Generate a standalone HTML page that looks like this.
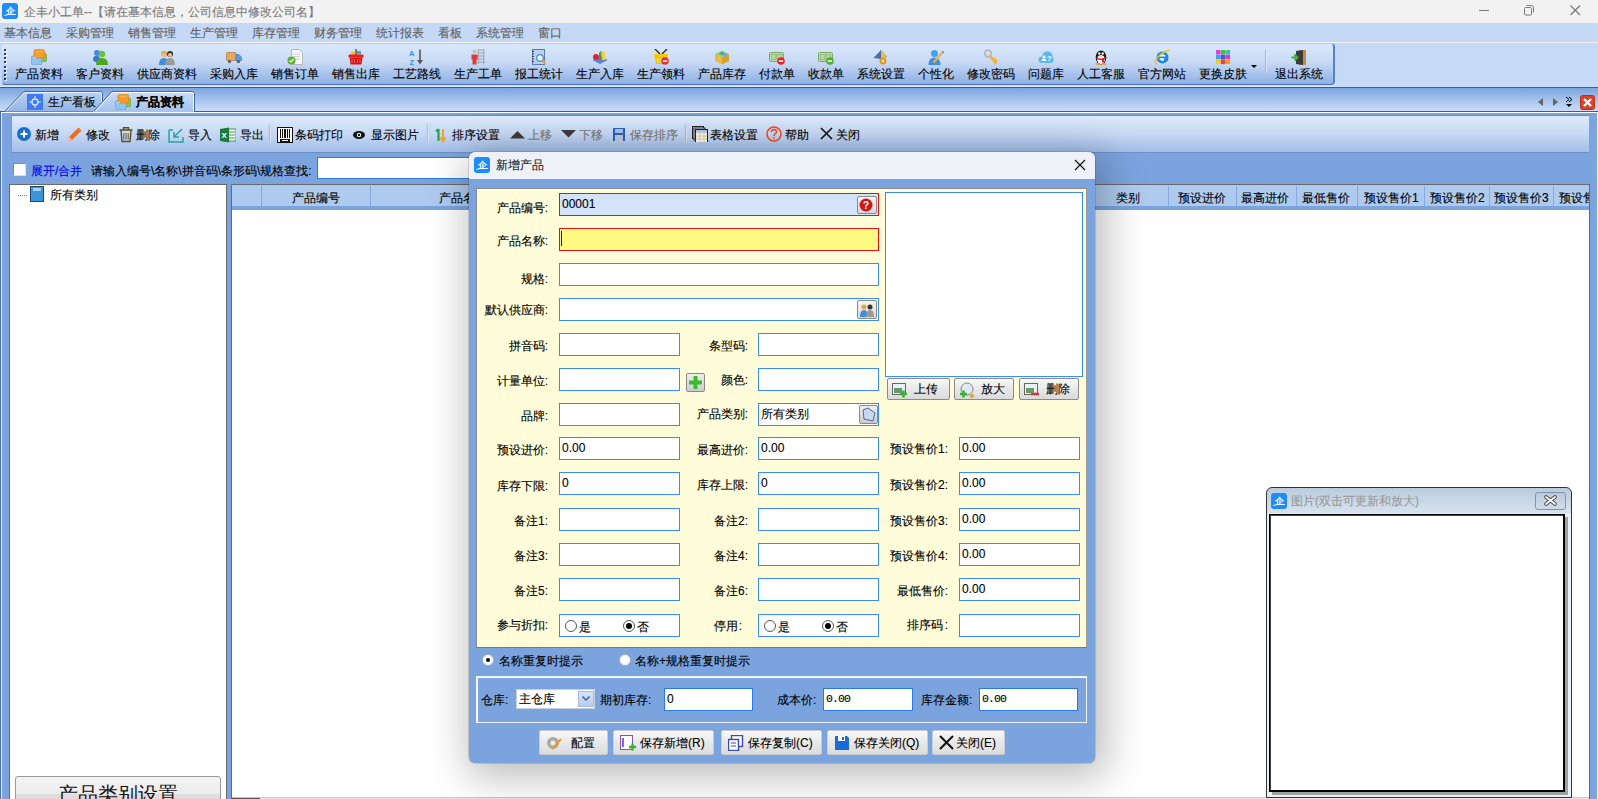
<!DOCTYPE html><html><head><meta charset="utf-8"><style>
*{box-sizing:border-box;margin:0;padding:0}
html,body{width:1598px;height:799px;overflow:hidden;background:#7ba4df;font-family:"Liberation Sans",sans-serif;font-size:12px;color:#000;position:relative}
.a{position:absolute}
.t{position:absolute;white-space:nowrap;line-height:14px;font-size:12px;-webkit-text-stroke:0.12px currentColor}
.lb{-webkit-text-stroke:0.12px currentColor}
.in span{-webkit-text-stroke:0.1px currentColor}
.gray{color:#8a8a8a}
tt{font-family:'Liberation Mono',monospace;font-size:11.5px;letter-spacing:-0.9px;position:relative;top:-1px}
.in{position:absolute;background:#fff;border:1px solid #3b8cf0;height:23px}
.in span{position:absolute;left:2px;top:3px;line-height:14px;white-space:nowrap}
.lb{position:absolute;white-space:nowrap;line-height:14px;text-align:right}
.btn{position:absolute;border:1px solid #b8b8b8;border-radius:2px;background:linear-gradient(#fbfbfb,#ececec 50%,#dcdcdc)}
.sbtn{position:absolute;border:1px solid #9a9a9a;border-radius:2px;background:linear-gradient(#f6f6f6,#d8d8d8)}
</style></head><body>
<div class="a" style="left:0px;top:0px;width:1598px;height:23px;background:#f2f2f2"></div>
<svg class="a" width="16" height="16" viewBox="0 0 16 16" style="left:2px;top:3px"><rect width="16" height="16" rx="3" fill="#1e8cff"/><text x="3.5" y="11" font-size="9" fill="#fff" font-family="Liberation Serif" font-weight="bold">企</text><path d="M2 12.5Q8 10.5 14 11.5" stroke="#fff" stroke-width="0.8" fill="none"/></svg>
<div class="t" style="left:24px;top:5px;color:#7a7a7a">企丰小工单--【请在基本信息，公司信息中修改公司名】</div>
<div class="a" style="left:1479px;top:10px;width:10px;height:1px;background:#7a7a7a"></div>
<svg class="a" width="13" height="13" viewBox="0 0 13 13" style="left:1523px;top:4px"><rect x="1.5" y="3.5" width="7" height="7.5" rx="1" fill="none" stroke="#7a7a7a"/><path d="M3.5 1.5H8.5Q10.5 1.5 10.5 3.5V8.5" fill="none" stroke="#7a7a7a"/></svg>
<svg class="a" width="13" height="13" viewBox="0 0 13 13" style="left:1569px;top:4px"><path d="M1.5 1.5L11 11M11 1.5L1.5 11" stroke="#777" stroke-width="1.15"/></svg>
<div class="a" style="left:0px;top:23px;width:1598px;height:19px;background:#c5d9f6"></div>
<div class="t" style="left:4px;top:26px;color:#5f5f5f">基本信息</div>
<div class="t" style="left:66px;top:26px;color:#5f5f5f">采购管理</div>
<div class="t" style="left:128px;top:26px;color:#5f5f5f">销售管理</div>
<div class="t" style="left:190px;top:26px;color:#5f5f5f">生产管理</div>
<div class="t" style="left:252px;top:26px;color:#5f5f5f">库存管理</div>
<div class="t" style="left:314px;top:26px;color:#5f5f5f">财务管理</div>
<div class="t" style="left:376px;top:26px;color:#5f5f5f">统计报表</div>
<div class="t" style="left:438px;top:26px;color:#5f5f5f">看板</div>
<div class="t" style="left:476px;top:26px;color:#5f5f5f">系统管理</div>
<div class="t" style="left:538px;top:26px;color:#5f5f5f">窗口</div>
<div class="a" style="left:0px;top:42px;width:1598px;height:45px;background:#c6daf6;border-top:1px solid #f0f1f2"></div>
<div class="a" style="left:0px;top:85px;width:1336px;height:2px;background:#d4e3fa"></div>
<div class="a" style="left:1px;top:43px;width:1334px;height:42px;border-radius:4px;background:linear-gradient(#d9e8fb,#c8daf5 45%,#8db0e5);border:1px solid #c6d8f4;border-top-color:#b3cdf3;border-right:2px solid #5584cc;border-bottom:1px solid #4d6fae"></div>
<div class="a" style="left:4px;top:49.0px;width:2px;height:2px;background:#1f3a7a;box-shadow:1px 1px 0 #fff"></div>
<div class="a" style="left:4px;top:53.15px;width:2px;height:2px;background:#1f3a7a;box-shadow:1px 1px 0 #fff"></div>
<div class="a" style="left:4px;top:57.3px;width:2px;height:2px;background:#1f3a7a;box-shadow:1px 1px 0 #fff"></div>
<div class="a" style="left:4px;top:61.45px;width:2px;height:2px;background:#1f3a7a;box-shadow:1px 1px 0 #fff"></div>
<div class="a" style="left:4px;top:65.6px;width:2px;height:2px;background:#1f3a7a;box-shadow:1px 1px 0 #fff"></div>
<div class="a" style="left:4px;top:69.75px;width:2px;height:2px;background:#1f3a7a;box-shadow:1px 1px 0 #fff"></div>
<div class="a" style="left:4px;top:73.9px;width:2px;height:2px;background:#1f3a7a;box-shadow:1px 1px 0 #fff"></div>
<div class="a" style="left:4px;top:78.05000000000001px;width:2px;height:2px;background:#1f3a7a;box-shadow:1px 1px 0 #fff"></div>
<div class="t" style="left:15px;top:67px;">产品资料</div>
<svg class="a" width="16" height="16" viewBox="0 0 16 16" style="left:31px;top:49px"><rect x="9.5" y="4.5" width="6" height="8" rx="1" fill="#8bc53f" stroke="#6a9a30" stroke-width="0.6"/><rect x="0.5" y="7" width="10.5" height="8.5" rx="1" fill="#8ec5f0" stroke="#6a9ad0" stroke-width="0.6"/><rect x="3" y="0.5" width="10.5" height="8.5" rx="1.5" fill="#f59d2a" stroke="#d87a10" stroke-width="0.6"/><ellipse cx="6.5" cy="2.5" rx="1.5" ry="0.8" fill="#fbbf5a"/><ellipse cx="10" cy="2.5" rx="1.5" ry="0.8" fill="#fbbf5a"/><ellipse cx="3.5" cy="8.5" rx="1.3" ry="0.7" fill="#c0e0fa"/></svg>
<div class="t" style="left:76px;top:67px;">客户资料</div>
<svg class="a" width="16" height="16" viewBox="0 0 16 16" style="left:92px;top:49px"><circle cx="5" cy="4" r="3" fill="#4a8ad8"/><rect x="1" y="7" width="7" height="6" rx="3" fill="#3a78c8"/><circle cx="10" cy="5" r="3.2" fill="#6cc03a"/><path d="M4 16Q4 9 10 9Q16 9 16 16Z" fill="#4aa81e"/></svg>
<div class="t" style="left:137px;top:67px;">供应商资料</div>
<svg class="a" width="16" height="16" viewBox="0 0 16 16" style="left:159px;top:49px"><circle cx="5" cy="5" r="3" fill="#e2a24a"/><path d="M0 16Q0 9 5 9Q10 9 10 16Z" fill="#3d8ee0"/><circle cx="11" cy="5" r="3" fill="#333"/><path d="M6 16Q6 9 11 9Q16 9 16 16Z" fill="#9a9a9a"/><circle cx="11" cy="6" r="2" fill="#f0c08a"/><circle cx="5" cy="6" r="2" fill="#f0c08a"/></svg>
<div class="t" style="left:210px;top:67px;">采购入库</div>
<svg class="a" width="16" height="16" viewBox="0 0 16 16" style="left:226px;top:49px"><rect x="0.5" y="3.5" width="9.5" height="8" rx="0.8" fill="#e8a860" stroke="#b07838" stroke-width="0.7"/><path d="M10 5.5H13L15.5 8.5V11.5H10Z" fill="#5aa0e0" stroke="#3a70b0" stroke-width="0.6"/><circle cx="3.5" cy="12.5" r="1.7" fill="#666"/><circle cx="12.5" cy="12.5" r="1.7" fill="#666"/></svg>
<div class="t" style="left:271px;top:67px;">销售订单</div>
<svg class="a" width="16" height="16" viewBox="0 0 16 16" style="left:287px;top:49px"><path d="M4.5 0.5H12L15.5 4V15.5H4.5Z" fill="#f6f6f6" stroke="#b8b8b8"/><path d="M6 5H13M6 7.5H13M6 10H13" stroke="#c8c8c8" stroke-width="0.8"/><circle cx="4.5" cy="11.5" r="4" fill="#5cb030"/><path d="M2.5 11.5L4 13L6.8 10" stroke="#fff" stroke-width="1.2" fill="none"/></svg>
<div class="t" style="left:332px;top:67px;">销售出库</div>
<svg class="a" width="16" height="16" viewBox="0 0 16 16" style="left:348px;top:49px"><rect x="3" y="2.5" width="10" height="3" rx="1" fill="#f0c020"/><rect x="9" y="2" width="4" height="3" fill="#40a0e0"/><rect x="7" y="0" width="2" height="6" fill="#777"/><rect x="0.5" y="5.5" width="15" height="3" rx="1" fill="#e81c1c"/><path d="M1.5 8.5H14.5L13.5 15.5H2.5Z" fill="#d41414"/><path d="M4 10V14M6.5 10V14M9.5 10V14M12 10V14" stroke="#ff8080" stroke-width="0.7"/></svg>
<div class="t" style="left:393px;top:67px;">工艺路线</div>
<svg class="a" width="16" height="16" viewBox="0 0 16 16" style="left:409px;top:49px"><text x="0" y="7" font-size="7.5" fill="#3a90e8" font-family="Liberation Sans" font-weight="bold">A</text><text x="0.5" y="15.5" font-size="7.5" fill="#3a90e8" font-family="Liberation Sans" font-weight="bold">Z</text><path d="M11 0.5V14" stroke="#555" stroke-width="1.6"/><path d="M8 11L11 15.5L14 11Z" fill="#555"/></svg>
<div class="t" style="left:454px;top:67px;">生产工单</div>
<svg class="a" width="16" height="16" viewBox="0 0 16 16" style="left:470px;top:49px"><path d="M7 1H15M7 4H15M7 7H15M7 10H15M7 13H15" stroke="#9aa4b0" stroke-width="1.2"/><path d="M8.5 0.5V15M13.5 0.5V15" stroke="#9aa4b0" stroke-width="0.8"/><circle cx="4.5" cy="2.5" r="2" fill="#c0c0c0"/><path d="M1.5 5.5H7.5V10.5H6.5V15.5H2.5V10.5H1.5Z" fill="#e03838"/></svg>
<div class="t" style="left:515px;top:67px;">报工统计</div>
<svg class="a" width="16" height="16" viewBox="0 0 16 16" style="left:531px;top:49px"><rect x="1.5" y="0.5" width="12" height="15" fill="#bcd0ea" stroke="#5a7ab0"/><path d="M1 2.5H3M1 5H3M1 7.5H3M1 10H3M1 12.5H3" stroke="#445"/><circle cx="9" cy="9" r="3.3" fill="#e8f4ff" stroke="#4a8ad0" stroke-width="1.2"/><path d="M11.3 11.3L14.5 14.5" stroke="#e0a030" stroke-width="2"/></svg>
<div class="t" style="left:576px;top:67px;">生产入库</div>
<svg class="a" width="16" height="16" viewBox="0 0 16 16" style="left:592px;top:49px"><path d="M0.5 11L8 7L15.5 11L8 15Z" fill="#5a80d8"/><circle cx="4" cy="8" r="3" fill="#e02030"/><path d="M7 4L9.5 1.5V10L7 11Z" fill="#40a050"/><rect x="10" y="3" width="3" height="8" fill="#f0d040"/></svg>
<div class="t" style="left:637px;top:67px;">生产领料</div>
<svg class="a" width="16" height="16" viewBox="0 0 16 16" style="left:653px;top:49px"><path d="M2 0L7 5M14 0L9 5" stroke="#222" stroke-width="1.3"/><rect x="1" y="5" width="14" height="3" fill="#f8c810"/><path d="M2 8H14L13 15H3Z" fill="#f0c000"/><path d="M5 9V14M8 9V14" stroke="#fff0a0" stroke-width="1"/><circle cx="12" cy="12" r="3.8" fill="#e83030"/><rect x="9.8" y="11.3" width="4.4" height="1.5" fill="#fff"/></svg>
<div class="t" style="left:698px;top:67px;">产品库存</div>
<svg class="a" width="16" height="16" viewBox="0 0 16 16" style="left:714px;top:49px"><path d="M1 5L8 1.5L15 5L8 8.5Z" fill="#9ad060"/><path d="M1 5V12L8 15.5V8.5Z" fill="#f0b840"/><path d="M15 5V12L8 15.5V8.5Z" fill="#d8a030"/><path d="M8 3L11 4.5L8 6L5 4.5Z" fill="#4090e0"/><path d="M11 4.5L14 6L11 7.5L8 6Z" fill="#50b0f0"/></svg>
<div class="t" style="left:759px;top:67px;">付款单</div>
<svg class="a" width="16" height="16" viewBox="0 0 16 16" style="left:769px;top:49px"><rect x="0.5" y="3.5" width="14" height="9" rx="1" fill="#bcd9a8" stroke="#7ea86a"/><rect x="2.5" y="5.5" width="10" height="5" fill="none" stroke="#8ab878" stroke-width="0.8"/><ellipse cx="7.5" cy="8" rx="2" ry="2.2" fill="#9cc888"/><circle cx="12" cy="12" r="3.8" fill="#e02828"/><rect x="9.8" y="11.3" width="4.4" height="1.5" fill="#fff"/></svg>
<div class="t" style="left:808px;top:67px;">收款单</div>
<svg class="a" width="16" height="16" viewBox="0 0 16 16" style="left:818px;top:49px"><rect x="0.5" y="3.5" width="14" height="9" rx="1" fill="#bcd9a8" stroke="#7ea86a"/><rect x="2.5" y="5.5" width="10" height="5" fill="none" stroke="#8ab878" stroke-width="0.8"/><ellipse cx="7.5" cy="8" rx="2" ry="2.2" fill="#9cc888"/><circle cx="12" cy="12" r="3.8" fill="#4cb02a"/><rect x="9.8" y="11.3" width="4.4" height="1.5" fill="#fff"/></svg>
<div class="t" style="left:857px;top:67px;">系统设置</div>
<svg class="a" width="16" height="16" viewBox="0 0 16 16" style="left:873px;top:49px"><path d="M0.5 9L8 1L14 8L8 10Z" fill="#4a6ea8"/><path d="M8 1L14 8L8 10Z" fill="#e8c050"/><circle cx="10" cy="12" r="3.5" fill="#e09a20"/><circle cx="10" cy="12" r="1.3" fill="#fff3c0"/></svg>
<div class="t" style="left:918px;top:67px;">个性化</div>
<svg class="a" width="16" height="16" viewBox="0 0 16 16" style="left:928px;top:49px"><circle cx="6.5" cy="4.5" r="3.5" fill="#4aa0f0"/><path d="M0.5 16Q0.5 8.5 6.5 8.5Q12.5 8.5 12.5 16Z" fill="#3a90e8"/><path d="M5.5 13.5L14.5 3.5" stroke="#f0b040" stroke-width="2.2"/><path d="M14.5 3.5L15.5 2.5" stroke="#e05050" stroke-width="2.2"/></svg>
<div class="t" style="left:967px;top:67px;">修改密码</div>
<svg class="a" width="16" height="16" viewBox="0 0 16 16" style="left:983px;top:49px"><circle cx="5" cy="4.5" r="3.3" fill="none" stroke="#b8b8b8" stroke-width="1.8"/><path d="M6.5 6.5L13.5 14.5" stroke="#f0b030" stroke-width="2.6"/><path d="M10.5 11L12.5 9M12 13L14 11" stroke="#f0b030" stroke-width="1.6"/></svg>
<div class="t" style="left:1028px;top:67px;">问题库</div>
<svg class="a" width="16" height="16" viewBox="0 0 16 16" style="left:1038px;top:49px"><path d="M4 14Q0 14 0.5 10Q1 7 4 7.5Q5 2 10 2.5Q15 3 14.5 8Q16 9 15.5 11.5Q15 14 12 14Z" fill="#5ab8ef"/><circle cx="6" cy="8" r="1.6" fill="#fff"/><path d="M3.5 12Q3.5 9.8 6 9.8Q8.5 9.8 8.5 12Z" fill="#fff"/><text x="9" y="11.5" font-size="7.5" fill="#fff" font-family="Liberation Sans" font-weight="bold">?</text></svg>
<div class="t" style="left:1077px;top:67px;">人工客服</div>
<svg class="a" width="16" height="16" viewBox="0 0 16 16" style="left:1093px;top:49px"><ellipse cx="8" cy="8.5" rx="5.3" ry="7" fill="#151515"/><ellipse cx="8" cy="10.5" rx="3.8" ry="4.5" fill="#fff"/><circle cx="6.3" cy="4.5" r="1.2" fill="#fff"/><circle cx="9.7" cy="4.5" r="1.2" fill="#fff"/><path d="M6.5 6.5H9.5L8 8Z" fill="#f0a020"/><path d="M3.5 8.5Q8 10.5 12.5 8.5V10Q8 12 3.5 10Z" fill="#e02020"/><rect x="9" y="9.5" width="2" height="4" fill="#e02020"/><ellipse cx="5" cy="15" rx="2.5" ry="1" fill="#f0a020"/><ellipse cx="11" cy="15" rx="2.5" ry="1" fill="#f0a020"/></svg>
<div class="t" style="left:1138px;top:67px;">官方网站</div>
<svg class="a" width="16" height="16" viewBox="0 0 16 16" style="left:1154px;top:49px"><circle cx="8.5" cy="8.5" r="6" fill="#1e88e0"/><circle cx="8.5" cy="8.5" r="3.2" fill="#fff"/><rect x="5" y="7.5" width="7" height="1.8" fill="#1e88e0"/><rect x="10" y="9.3" width="4" height="2.5" fill="#1e88e0"/><path d="M2.5 15.5Q-1 12 6 6Q12 1 15.5 1.5" stroke="#f4c020" stroke-width="1.5" fill="none"/></svg>
<div class="t" style="left:1199px;top:67px;">更换皮肤</div>
<svg class="a" width="16" height="16" viewBox="0 0 16 16" style="left:1215px;top:49px"><rect x="1" y="1" width="4.5" height="4.5" fill="#e040e0"/><rect x="5.8" y="1" width="4.5" height="4.5" fill="#40c040"/><rect x="10.6" y="1" width="4.5" height="4.5" fill="#40c0a0"/><rect x="1" y="5.8" width="4.5" height="4.5" fill="#40a0f0"/><rect x="5.8" y="5.8" width="4.5" height="4.5" fill="#5050e0"/><rect x="10.6" y="5.8" width="4.5" height="4.5" fill="#d040d0"/><rect x="1" y="10.6" width="4.5" height="4.5" fill="#f0d020"/><rect x="5.8" y="10.6" width="4.5" height="4.5" fill="#f04040"/><rect x="10.6" y="10.6" width="4.5" height="4.5" fill="#f0a020"/></svg>
<div class="t" style="left:1275px;top:67px;">退出系统</div>
<svg class="a" width="16" height="16" viewBox="0 0 16 16" style="left:1291px;top:49px"><rect x="8" y="1" width="7" height="15" fill="#c88a40"/><path d="M5 2L12 1V16L5 15Z" fill="#3a3a3a"/><path d="M0.5 8.5H6M3.5 5.5L6.5 8.5L3.5 11.5" stroke="#40b030" stroke-width="2.2" fill="none"/></svg>
<svg class="a" width="6" height="3" viewBox="0 0 6 3" style="left:1251px;top:65px"><path d="M0 0H6L3 3Z" fill="#000"/></svg>
<div class="a" style="left:1265px;top:50px;width:2px;height:23px;background:linear-gradient(90deg,#7e9fd3,#fff)"></div>
<div class="a" style="left:0px;top:87px;width:1598px;height:25px;background:linear-gradient(#7ba4e0,#a9c5ed 55%,#c9dcf7);border-top:1px solid #3b5c9c;border-bottom:1px solid #3b5c9c"></div>
<svg class="a" width="200" height="25" viewBox="0 0 200 25" style="left:0px;top:88px"><defs><linearGradient id="g1" x1="0" y1="0" x2="0" y2="1"><stop offset="0" stop-color="#bcd2f2"/><stop offset="1" stop-color="#92b4e6"/></linearGradient><linearGradient id="g2" x1="0" y1="0" x2="0" y2="1"><stop offset="0" stop-color="#cadcf6"/><stop offset="1" stop-color="#a3c1ec"/></linearGradient></defs><path d="M4.5 23.5L24 3.5H100Q102.5 3.5 102.5 6V23.5" fill="url(#g1)" stroke="#4068ac"/><path d="M6.5 23L24.5 4.5H100Q101.5 4.5 101.5 6V23" fill="none" stroke="#eef4fc" stroke-width="0.9"/><path d="M92.5 24.5L112 3.5H192Q194.5 3.5 194.5 6V24.5" fill="url(#g2)" stroke="#4068ac"/><path d="M94.5 24.5L112.5 4.5H192Q193.5 4.5 193.5 6V24.5" fill="none" stroke="#fff" stroke-width="0.9"/><rect x="93" y="23" width="101" height="2" fill="#a6c3ec"/></svg>
<svg class="a" width="16" height="16" viewBox="0 0 16 16" style="left:27px;top:94px"><rect width="16" height="16" fill="#3f7af0"/><circle cx="8" cy="8" r="3" fill="none" stroke="#cfe0ff" stroke-width="1.4"/><path d="M8 2V5M8 11V14M2 8H5M11 8H14" stroke="#cfe0ff" stroke-width="1.2"/></svg>
<div class="t" style="left:48px;top:95px;">生产看板</div>
<svg class="a" width="16" height="16" viewBox="0 0 16 16" style="left:115px;top:94px"><rect x="9.5" y="4.5" width="6" height="8" rx="1" fill="#8bc53f" stroke="#6a9a30" stroke-width="0.6"/><rect x="0.5" y="7" width="10.5" height="8.5" rx="1" fill="#8ec5f0" stroke="#6a9ad0" stroke-width="0.6"/><rect x="3" y="0.5" width="10.5" height="8.5" rx="1.5" fill="#f59d2a" stroke="#d87a10" stroke-width="0.6"/><ellipse cx="6.5" cy="2.5" rx="1.5" ry="0.8" fill="#fbbf5a"/><ellipse cx="10" cy="2.5" rx="1.5" ry="0.8" fill="#fbbf5a"/><ellipse cx="3.5" cy="8.5" rx="1.3" ry="0.7" fill="#c0e0fa"/></svg>
<div class="t" style="left:136px;top:95px;font-weight:bold">产品资料</div>
<svg class="a" width="5" height="8" viewBox="0 0 5 8" style="left:1538px;top:98px"><path d="M5 0V8L0 4Z" fill="#666"/></svg>
<svg class="a" width="5" height="8" viewBox="0 0 5 8" style="left:1553px;top:98px"><path d="M0 0V8L5 4Z" fill="#666"/></svg>
<svg class="a" width="8" height="11" viewBox="0 0 8 11" style="left:1565px;top:96px"><path d="M1 1L4 3.5L1 6M4 1L7 3.5L4 6" stroke="#000" fill="none"/><path d="M1 8H7L4 11Z" fill="#000"/></svg>
<svg class="a" width="15" height="15" viewBox="0 0 15 15" style="left:1580px;top:95px"><rect x="0.5" y="0.5" width="14" height="14" rx="2" fill="#e0402a" stroke="#b03020"/><path d="M4 4L11 11M11 4L4 11" stroke="#fff" stroke-width="2.4"/></svg>
<div class="a" style="left:0px;top:112px;width:1598px;height:1px;background:#fff"></div>
<div class="a" style="left:0px;top:113px;width:1598px;height:686px;background:#7ba4df"></div>
<div class="a" style="left:1px;top:113px;width:1px;height:686px;background:#eaf1fb"></div>
<div class="a" style="left:0px;top:112px;width:1px;height:687px;background:#4a6fb0"></div>
<div class="a" style="left:11px;top:115px;width:1579px;height:38px;background:linear-gradient(#dfeafb,#c6d8f4 50%,#a2bee9);border:1px solid #7f9bca;border-top-color:#6a88b8;border-bottom-color:#6f8fc4"></div>
<svg class="a" width="14" height="16" viewBox="0 0 14 16" style="left:17px;top:127px"><circle cx="7" cy="7" r="7" fill="#1a6fd0"/><path d="M7 3.5V10.5M3.5 7H10.5" stroke="#fff" stroke-width="2"/></svg>
<div class="t" style="left:35px;top:128px;">新增</div>
<svg class="a" width="15" height="16" viewBox="0 0 15 16" style="left:67px;top:127px"><path d="M1 14L2 10L10 2L13 5L5 13Z" fill="#f26a1b"/><path d="M10 2L11.5 0.5L14.5 3.5L13 5Z" fill="#f26a1b"/><path d="M1 14L2 10L5 13Z" fill="#fbb"/></svg>
<div class="t" style="left:86px;top:128px;">修改</div>
<svg class="a" width="14" height="16" viewBox="0 0 14 16" style="left:119px;top:127px"><path d="M0.5 3H13.5M4.5 3V0.8H9.5V3M2 3.5L3 14.5H11L12 3.5" stroke="#5e4f1e" stroke-width="1.4" fill="none"/><path d="M4.8 6V12.5M7 6V12.5M9.2 6V12.5" stroke="#5e4f1e" stroke-width="0.9"/></svg>
<div class="t" style="left:136px;top:128px;">删除</div>
<svg class="a" width="16" height="16" viewBox="0 0 16 16" style="left:168px;top:127px"><path d="M1 3V15H15V10M1 3H5" stroke="#26a59a" stroke-width="1.5" fill="none"/><path d="M14 2L6 10M6 5V10H11" stroke="#26a59a" stroke-width="1.5" fill="none"/></svg>
<div class="t" style="left:188px;top:128px;">导入</div>
<svg class="a" width="16" height="16" viewBox="0 0 16 16" style="left:220px;top:127px"><rect x="5" y="2" width="11" height="12" fill="#fff" stroke="#3a9a4a"/><path d="M8 5H15M8 8H15M8 11H15" stroke="#3a9a4a"/><path d="M0 2L9 0.5V15.5L0 14Z" fill="#1e7a3a"/><text x="1.5" y="11" font-size="8" font-weight="bold" fill="#fff" font-family="Liberation Sans">X</text></svg>
<div class="t" style="left:240px;top:128px;">导出</div>
<svg class="a" width="16" height="16" viewBox="0 0 16 16" style="left:277px;top:127px"><rect x="0.5" y="0.5" width="15" height="15" fill="#fff" stroke="#111"/><rect x="3" y="2" width="1" height="9" fill="#111"/><rect x="5" y="2" width="1" height="9" fill="#111"/><rect x="7" y="2" width="2" height="9" fill="#111"/><rect x="10" y="2" width="1" height="9" fill="#111"/><rect x="12" y="2" width="1" height="9" fill="#111"/><rect x="3" y="12" width="10" height="3" fill="#111"/><rect x="5" y="13" width="6" height="1" fill="#fff"/></svg>
<div class="t" style="left:295px;top:128px;">条码打印</div>
<svg class="a" width="12" height="16" viewBox="0 0 12 16" style="left:353px;top:127px"><g transform="translate(0,3)"><ellipse cx="6" cy="5" rx="6" ry="4" fill="#111"/><circle cx="6" cy="5" r="2.2" fill="#fff"/><circle cx="6" cy="5" r="1.2" fill="#111"/></g></svg>
<div class="t" style="left:371px;top:128px;">显示图片</div>
<svg class="a" width="11" height="16" viewBox="0 0 11 16" style="left:435px;top:127px"><path d="M3.5 2V14" stroke="#1fa84a" stroke-width="2.2"/><path d="M1 4.5L3.5 2" stroke="#1fa84a" stroke-width="1.8"/><path d="M8 2V13M5.5 10.5L8 14L10.5 10.5" stroke="#f7a21b" stroke-width="2" fill="none"/></svg>
<div class="t" style="left:452px;top:128px;">排序设置</div>
<svg class="a" width="15" height="16" viewBox="0 0 15 16" style="left:510px;top:127px"><path d="M0 11.5L7.5 4L15 11.5Z" fill="#3a3a3a"/></svg>
<div class="t" style="left:528px;top:128px;color:#777">上移</div>
<svg class="a" width="15" height="16" viewBox="0 0 15 16" style="left:561px;top:127px"><path d="M0 3H15L7.5 10.5Z" fill="#3a3a3a"/></svg>
<div class="t" style="left:579px;top:128px;color:#777">下移</div>
<svg class="a" width="12" height="16" viewBox="0 0 12 16" style="left:613px;top:127px"><rect x="0" y="1" width="12" height="13" fill="#2a62c0"/><rect x="2" y="2" width="8" height="4" fill="#a8c0e8"/><rect x="2" y="8" width="8" height="6" fill="#c0c8d8"/></svg>
<div class="t" style="left:630px;top:128px;color:#777">保存排序</div>
<svg class="a" width="16" height="16" viewBox="0 0 16 16" style="left:692px;top:126px"><g><rect x="0.5" y="0.5" width="11" height="12" fill="#f8e8b0" stroke="#222"/><rect x="2" y="2" width="11" height="12" fill="#e8f0f8" stroke="#222"/><rect x="3.5" y="3.5" width="12" height="13" fill="#fffef0" stroke="#222"/><path d="M4 7H15M4 10H15M4 13H15M8 4V16M12 4V16" stroke="#d8c890" stroke-width="0.8"/><rect x="4" y="4" width="11" height="2.5" fill="#a8c8f0"/></g></svg>
<div class="t" style="left:710px;top:128px;">表格设置</div>
<svg class="a" width="16" height="16" viewBox="0 0 16 16" style="left:766px;top:126px"><g><circle cx="8" cy="8" r="7" fill="none" stroke="#f04a1c" stroke-width="1.6"/><path d="M5.5 6Q5.5 3.5 8 3.5Q10.5 3.5 10.5 5.8Q10.5 7.3 8.5 8.3Q8 8.6 8 10" stroke="#f04a1c" stroke-width="1.5" fill="none"/><rect x="7.2" y="11.2" width="1.6" height="1.6" fill="#f04a1c"/></g></svg>
<div class="t" style="left:785px;top:128px;">帮助</div>
<svg class="a" width="13" height="16" viewBox="0 0 13 16" style="left:820px;top:127px"><path d="M1 1L12 12M12 1L1 12" stroke="#111" stroke-width="1.6"/></svg>
<div class="t" style="left:836px;top:128px;">关闭</div>
<div class="a" style="left:268px;top:123px;width:5px;height:21px;background:rgba(190,210,240,0.35)"></div>
<div class="a" style="left:269px;top:125px;width:2px;height:17px;background:linear-gradient(90deg,#8eaad8,#f6f9fe)"></div>
<div class="a" style="left:426px;top:123px;width:5px;height:21px;background:rgba(190,210,240,0.35)"></div>
<div class="a" style="left:427px;top:125px;width:2px;height:17px;background:linear-gradient(90deg,#8eaad8,#f6f9fe)"></div>
<div class="a" style="left:684px;top:123px;width:5px;height:21px;background:rgba(190,210,240,0.35)"></div>
<div class="a" style="left:685px;top:125px;width:2px;height:17px;background:linear-gradient(90deg,#8eaad8,#f6f9fe)"></div>
<div class="a" style="left:13px;top:163px;width:13px;height:13px;background:#fff;border:1px solid #8a8a8a;border-right-color:#ddd;border-bottom-color:#ddd"></div>
<div class="t" style="left:31px;top:164px;color:#0000f0">展开/合并</div>
<div class="t" style="left:91px;top:164px;">请输入编号\名称\拼音码\条形码\规格查找:</div>
<div class="a" style="left:317px;top:157px;width:300px;height:22px;background:#fff;border:1px solid #2a7ae2"></div>
<div class="a" style="left:9px;top:184px;width:218px;height:615px;background:#fff;border:1px solid #6a6a6a;border-bottom:none"></div>
<div class="a" style="left:18px;top:195px;width:10px;height:1px;background:repeating-linear-gradient(90deg,#777 0 1px,transparent 1px 2px)"></div>
<svg class="a" width="14" height="16" viewBox="0 0 14 16" style="left:30px;top:186px"><rect x="0.5" y="0.5" width="13" height="15" fill="#3a94d8" stroke="#1a4a80"/><rect x="3" y="2" width="8" height="3" fill="#a8d4f4"/></svg>
<div class="t" style="left:50px;top:188px;">所有类别</div>
<div class="a" style="left:15px;top:776px;width:206px;height:30px;border:1px solid #9a9a9a;border-radius:3px;background:linear-gradient(#f4f4f4,#ececec 17px,#dedede 17px)"></div>
<div class="t" style="left:58px;top:784px;font-family:'Liberation Serif',serif;font-size:19.6px;line-height:22px;-webkit-text-stroke:0;color:#111">产品类别设置</div>
<div class="a" style="left:231px;top:184px;width:1359px;height:615px;background:#fff;border:1px solid #6a6a6a;border-right:none;border-bottom:none"></div>
<div class="a" style="left:232px;top:797px;width:1357px;height:1px;background:#a9c9f2"></div>
<div class="a" style="left:232px;top:798px;width:1357px;height:1px;background:#e8e8e8"></div>
<div class="a" style="left:232px;top:798px;width:28px;height:1px;background:#555"></div>
<div class="a" style="left:232px;top:185px;width:1357px;height:21px;background:#aecbef"></div>
<div class="a" style="left:232px;top:206px;width:1357px;height:4px;background:#7ba4df"></div>
<div class="a" style="left:261px;top:186px;width:1px;height:20px;background:#86a9de"></div>
<div class="a" style="left:370px;top:186px;width:1px;height:20px;background:#86a9de"></div>
<div class="a" style="left:1168px;top:186px;width:1px;height:20px;background:#86a9de"></div>
<div class="a" style="left:1236px;top:186px;width:1px;height:20px;background:#86a9de"></div>
<div class="a" style="left:1296px;top:186px;width:1px;height:20px;background:#86a9de"></div>
<div class="a" style="left:1357px;top:186px;width:1px;height:20px;background:#86a9de"></div>
<div class="a" style="left:1424px;top:186px;width:1px;height:20px;background:#86a9de"></div>
<div class="a" style="left:1489px;top:186px;width:1px;height:20px;background:#86a9de"></div>
<div class="a" style="left:1553px;top:186px;width:1px;height:20px;background:#86a9de"></div>
<div class="t" style="left:292px;top:191px;">产品编号</div>
<div class="t" style="left:439px;top:191px;">产品名称</div>
<div class="t" style="left:1116px;top:191px;">类别</div>
<div class="t" style="left:1178px;top:191px;">预设进价</div>
<div class="t" style="left:1241px;top:191px;">最高进价</div>
<div class="t" style="left:1302px;top:191px;">最低售价</div>
<div class="t" style="left:1364px;top:191px;">预设售价1</div>
<div class="t" style="left:1430px;top:191px;">预设售价2</div>
<div class="t" style="left:1494px;top:191px;">预设售价3</div>
<div class="t" style="left:1559px;top:191px;">预设售价4</div>
<div class="a" style="left:1589px;top:113px;width:9px;height:686px;background:#7ba4df"></div>
<div class="a" style="left:1589px;top:184px;width:1px;height:615px;background:#6a6a6a"></div>
<div class="a" style="left:1597px;top:113px;width:1px;height:686px;background:#f0f5fc"></div>
<div class="a" style="left:1266px;top:487px;width:306px;height:311px;background:linear-gradient(#bccbdc,#d6e2ee 25px,#e8f0f8 26px);border:1px solid #333;border-radius:6px 6px 0 0"></div>
<svg class="a" width="16" height="16" viewBox="0 0 16 16" style="left:1271px;top:493px"><rect width="16" height="16" rx="3" fill="#1e8cff"/><text x="3.5" y="11" font-size="9" fill="#fff" font-family="Liberation Serif" font-weight="bold">企</text><path d="M2 12.5Q8 10.5 14 11.5" stroke="#fff" stroke-width="0.8" fill="none"/></svg>
<div class="t" style="left:1291px;top:494px;color:#9a9a9a">图片(双击可更新和放大)</div>
<div class="a" style="left:1535px;top:492px;width:31px;height:18px;border:1px solid #7f92b0;border-radius:3px;background:linear-gradient(#bccbdc,#cfdbe8)"></div>
<svg class="a" width="13" height="11" viewBox="0 0 13 11" style="left:1544px;top:495px"><path d="M2 2L11 9M11 2L2 9" stroke="#444" stroke-width="3.6" stroke-linecap="round"/><path d="M2 2L11 9M11 2L2 9" stroke="#f4f4f4" stroke-width="2" stroke-linecap="round"/></svg>
<div class="a" style="left:1272px;top:517px;width:296px;height:278px;background:#a0a0a0"></div>
<div class="a" style="left:1269px;top:514px;width:296px;height:278px;background:#fff;border:1px solid #000;border-right-width:2px;border-bottom-width:2px;box-shadow:inset 1px 1px 0 #444"></div>
<div class="a" style="left:469px;top:152px;width:626px;height:611px;border-radius:6px;background:#7ba4df;box-shadow:0 0 0 1px rgba(0,0,0,0.12),5px 8px 40px 6px rgba(0,0,0,0.27)"></div>
<div class="a" style="left:469px;top:152px;width:626px;height:27px;border-radius:6px 6px 0 0;background:#eef2f8"></div>
<svg class="a" width="16" height="16" viewBox="0 0 16 16" style="left:474px;top:157px"><rect width="16" height="16" rx="3" fill="#1e8cff"/><text x="3.5" y="11" font-size="9" fill="#fff" font-family="Liberation Serif" font-weight="bold">企</text><path d="M2 12.5Q8 10.5 14 11.5" stroke="#fff" stroke-width="0.8" fill="none"/></svg>
<div class="t" style="left:496px;top:158px;color:#222">新增产品</div>
<svg class="a" width="12" height="12" viewBox="0 0 12 12" style="left:1074px;top:159px"><path d="M1 1L11 11M11 1L1 11" stroke="#111" stroke-width="1.2"/></svg>
<div class="a" style="left:476px;top:188px;width:611px;height:460px;background:#fffcda;border:1px solid #8a8a8a;border-right-color:#999;border-bottom-color:#777"></div>
<div class="lb" style="right:1050px;top:201px">产品编号:</div>
<div class="in" style="left:559px;top:193px;width:320px;background:#d3e3fa;border-color:#e81010"><span>00001</span></div>
<div class="a" style="left:857px;top:196px;width:20px;height:18px;border:1px solid #8a8a8a;border-radius:2px;background:linear-gradient(#f4f4f4,#d8d8d8)"></div>
<svg class="a" width="14" height="14" viewBox="0 0 14 14" style="left:859px;top:198px"><circle cx="7" cy="7" r="6.5" fill="#d01818"/><text x="4" y="11" font-size="10" font-weight="bold" fill="#fff" font-family="Liberation Sans">?</text></svg>
<div class="lb" style="right:1050px;top:234px">产品名称:</div>
<div class="in" style="left:559px;top:228px;width:320px;background:#fffb80;border-color:#e81010"><span></span></div>
<div class="a" style="left:561px;top:231px;width:1px;height:15px;background:#0a0a70"></div>
<div class="lb" style="right:1050px;top:272px">规格:</div>
<div class="in" style="left:559px;top:263px;width:320px;background:#fff;border-color:#3b8cf0"><span></span></div>
<div class="lb" style="right:1050px;top:303px">默认供应商:</div>
<div class="in" style="left:559px;top:298px;width:320px;background:#fff;border-color:#3b8cf0"><span></span></div>
<div class="a" style="left:857px;top:300px;width:20px;height:19px;border:1px solid #8a8a8a;border-radius:2px;background:linear-gradient(#f4f4f4,#d8d8d8)"></div>
<svg class="a" width="16" height="16" viewBox="0 0 16 16" style="left:859px;top:302px"><circle cx="5" cy="5" r="2.5" fill="#e2a24a"/><path d="M1 15Q1 8 5 8Q9 8 9 15Z" fill="#3d8ee0"/><circle cx="11" cy="5" r="2.5" fill="#333"/><path d="M7 15Q7 8 11 8Q15 8 15 15Z" fill="#9a9a9a"/></svg>
<div class="lb" style="right:1050px;top:339px">拼音码:</div>
<div class="in" style="left:559px;top:333px;width:121px;background:#fff;border-color:#3b8cf0"><span></span></div>
<div class="lb" style="right:850px;top:339px">条型码:</div>
<div class="in" style="left:758px;top:333px;width:121px;background:#fff;border-color:#3b8cf0"><span></span></div>
<div class="lb" style="right:1050px;top:374px">计量单位:</div>
<div class="in" style="left:559px;top:368px;width:121px;background:#fff;border-color:#3b8cf0"><span></span></div>
<div class="lb" style="right:850px;top:373px">颜色:</div>
<div class="in" style="left:758px;top:368px;width:121px;background:#fff;border-color:#3b8cf0"><span></span></div>
<div class="a" style="left:686px;top:373px;width:19px;height:19px;border:1px solid #8a8a8a;border-radius:2px;background:linear-gradient(#eee,#ccc)"></div>
<svg class="a" width="15" height="15" viewBox="0 0 15 15" style="left:688px;top:375px"><path d="M5.5 1H9.5V5.5H14V9.5H9.5V14H5.5V9.5H1V5.5H5.5Z" fill="#3cbc2c"/></svg>
<div class="lb" style="right:1050px;top:409px">品牌:</div>
<div class="in" style="left:559px;top:403px;width:121px;background:#fff;border-color:#3b8cf0"><span></span></div>
<div class="lb" style="right:850px;top:407px">产品类别:</div>
<div class="in" style="left:758px;top:403px;width:121px;background:#fff;border-color:#3b8cf0"><span>所有类别</span></div>
<div class="a" style="left:859px;top:405px;width:19px;height:19px;border:1px solid #8a8a8a;border-radius:2px;background:linear-gradient(#eee,#ccc)"></div>
<svg class="a" width="15" height="15" viewBox="0 0 15 15" style="left:861px;top:407px"><path d="M2 3L7 1L14 6L12 14L3 12Z" fill="#c8d8f0" stroke="#4a6a9a"/></svg>
<div class="lb" style="right:1050px;top:443px">预设进价:</div>
<div class="in" style="left:559px;top:437px;width:121px;background:#fff;border-color:#3b8cf0"><span>0.00</span></div>
<div class="lb" style="right:850px;top:443px">最高进价:</div>
<div class="in" style="left:758px;top:437px;width:121px;background:#fff;border-color:#3b8cf0"><span>0.00</span></div>
<div class="lb" style="right:650px;top:442px">预设售价1:</div>
<div class="in" style="left:959px;top:437px;width:121px;background:#fff;border-color:#3b8cf0"><span>0.00</span></div>
<div class="lb" style="right:1050px;top:479px">库存下限:</div>
<div class="in" style="left:559px;top:472px;width:121px;background:#fff;border-color:#3b8cf0"><span>0</span></div>
<div class="lb" style="right:850px;top:478px">库存上限:</div>
<div class="in" style="left:758px;top:472px;width:121px;background:#fff;border-color:#3b8cf0"><span>0</span></div>
<div class="lb" style="right:650px;top:478px">预设售价2:</div>
<div class="in" style="left:959px;top:472px;width:121px;background:#fff;border-color:#3b8cf0"><span>0.00</span></div>
<div class="lb" style="right:1050px;top:514px">备注1:</div>
<div class="in" style="left:559px;top:508px;width:121px;background:#fff;border-color:#3b8cf0"><span></span></div>
<div class="lb" style="right:850px;top:514px">备注2:</div>
<div class="in" style="left:758px;top:508px;width:121px;background:#fff;border-color:#3b8cf0"><span></span></div>
<div class="lb" style="right:650px;top:514px">预设售价3:</div>
<div class="in" style="left:959px;top:508px;width:121px;background:#fff;border-color:#3b8cf0"><span>0.00</span></div>
<div class="lb" style="right:1050px;top:549px">备注3:</div>
<div class="in" style="left:559px;top:543px;width:121px;background:#fff;border-color:#3b8cf0"><span></span></div>
<div class="lb" style="right:850px;top:549px">备注4:</div>
<div class="in" style="left:758px;top:543px;width:121px;background:#fff;border-color:#3b8cf0"><span></span></div>
<div class="lb" style="right:650px;top:549px">预设售价4:</div>
<div class="in" style="left:959px;top:543px;width:121px;background:#fff;border-color:#3b8cf0"><span>0.00</span></div>
<div class="lb" style="right:1050px;top:584px">备注5:</div>
<div class="in" style="left:559px;top:578px;width:121px;background:#fff;border-color:#3b8cf0"><span></span></div>
<div class="lb" style="right:850px;top:584px">备注6:</div>
<div class="in" style="left:758px;top:578px;width:121px;background:#fff;border-color:#3b8cf0"><span></span></div>
<div class="lb" style="right:650px;top:584px">最低售价:</div>
<div class="in" style="left:959px;top:578px;width:121px;background:#fff;border-color:#3b8cf0"><span>0.00</span></div>
<div class="lb" style="right:1050px;top:618px">参与折扣:</div>
<div class="in" style="left:559px;top:614px;width:121px;background:#fff;border-color:#3b8cf0"><span></span></div>
<div class="lb" style="right:856px;top:619px">停用<span style="margin-left:1px">:</span></div>
<div class="in" style="left:758px;top:614px;width:121px;background:#fff;border-color:#3b8cf0"><span></span></div>
<div class="lb" style="right:650px;top:618px">排序码<span style="margin-left:2px">:</span></div>
<div class="in" style="left:959px;top:614px;width:121px;background:#fff;border-color:#3b8cf0"><span></span></div>
<svg class="a" width="12" height="12" viewBox="0 0 12 12" style="left:565px;top:620px"><circle cx="6" cy="6" r="5.5" fill="#fff" stroke="#555"/></svg>
<div class="t" style="left:579px;top:620px;">是</div>
<svg class="a" width="12" height="12" viewBox="0 0 12 12" style="left:623px;top:620px"><circle cx="6" cy="6" r="5.5" fill="#fff" stroke="#555"/><circle cx="6" cy="6" r="3" fill="#000"/></svg>
<div class="t" style="left:637px;top:620px;">否</div>
<svg class="a" width="12" height="12" viewBox="0 0 12 12" style="left:764px;top:620px"><circle cx="6" cy="6" r="5.5" fill="#fff" stroke="#555"/></svg>
<div class="t" style="left:778px;top:620px;">是</div>
<svg class="a" width="12" height="12" viewBox="0 0 12 12" style="left:822px;top:620px"><circle cx="6" cy="6" r="5.5" fill="#fff" stroke="#555"/><circle cx="6" cy="6" r="3" fill="#000"/></svg>
<div class="t" style="left:836px;top:620px;">否</div>
<div class="a" style="left:885px;top:192px;width:198px;height:185px;background:#fff;border:1px solid #3b8cf0"></div>
<div class="a" style="left:887px;top:378px;width:63px;height:22px;border:1px solid #8a8a8a;border-radius:2px;background:linear-gradient(#f8f8f8,#dadada)"></div>
<svg class="a" width="16" height="16" viewBox="0 0 16 16" style="left:892px;top:382px"><rect x="0.5" y="1.5" width="13" height="11" fill="#e8f0f8" stroke="#666"/><rect x="2" y="6" width="8" height="5" fill="#6a9a6a"/><path d="M8 12H15M11.5 8.5V15.5" stroke="#3cb030" stroke-width="2.5"/></svg>
<div class="t" style="left:914px;top:382px;">上传</div>
<div class="a" style="left:954px;top:378px;width:60px;height:22px;border:1px solid #8a8a8a;border-radius:2px;background:linear-gradient(#f8f8f8,#dadada)"></div>
<svg class="a" width="16" height="16" viewBox="0 0 16 16" style="left:959px;top:382px"><circle cx="8" cy="7" r="6" fill="#e0e8f0" stroke="#888"/><path d="M1 12H8M4.5 8.5V15.5" stroke="#3cb030" stroke-width="2.5"/><circle cx="13" cy="14" r="2" fill="#f0a020"/></svg>
<div class="t" style="left:981px;top:382px;">放大</div>
<div class="a" style="left:1019px;top:378px;width:60px;height:22px;border:1px solid #8a8a8a;border-radius:2px;background:linear-gradient(#f8f8f8,#dadada)"></div>
<svg class="a" width="16" height="16" viewBox="0 0 16 16" style="left:1024px;top:382px"><rect x="0.5" y="1.5" width="13" height="11" fill="#e8f0f8" stroke="#666"/><rect x="2" y="6" width="8" height="5" fill="#6a9a6a"/><path d="M7 12H15" stroke="#e03030" stroke-width="2.5"/></svg>
<div class="t" style="left:1046px;top:382px;">删除</div>
<svg class="a" width="12" height="12" viewBox="0 0 12 12" style="left:482px;top:654px"><circle cx="6" cy="6" r="5.5" fill="#fff" stroke="#a8aeb8"/><circle cx="6" cy="6" r="4.5" fill="none" stroke="#f0f0f0"/><circle cx="6" cy="6" r="2" fill="#000"/></svg>
<div class="t" style="left:499px;top:654px;">名称重复时提示</div>
<svg class="a" width="12" height="12" viewBox="0 0 12 12" style="left:619px;top:654px"><circle cx="6" cy="6" r="5.5" fill="#fff" stroke="#a8aeb8"/><circle cx="6" cy="6" r="4.5" fill="none" stroke="#f0f0f0"/></svg>
<div class="t" style="left:635px;top:654px;">名称+规格重复时提示</div>
<div class="a" style="left:476px;top:676px;width:611px;height:47px;border:1px solid #eef2f8;border-top-color:#e8eef8;box-shadow:inset 1px 1px 0 #fff"></div>
<div class="t" style="left:481px;top:693px;">仓库:</div>
<div class="a" style="left:516px;top:689px;width:79px;height:20px;background:#fff;border:1px solid #c8d0dc"></div>
<div class="t" style="left:519px;top:692px;">主仓库</div>
<div class="a" style="left:578px;top:691px;width:16px;height:16px;background:linear-gradient(#d8e4f8,#b8ccf0);border:1px solid #a8bce0"></div>
<svg class="a" width="8" height="5" viewBox="0 0 8 5" style="left:582px;top:696px"><path d="M0.5 0.5L4 4L7.5 0.5" stroke="#4a6aa0" stroke-width="1.6" fill="none"/></svg>
<div class="t" style="left:600px;top:693px;">期初库存:</div>
<div class="in" style="left:664px;top:688px;width:89px;background:#fff;border-color:#2a7ae2"><span>0</span></div>
<div class="t" style="left:777px;top:693px;">成本价:</div>
<div class="in" style="left:823px;top:688px;width:90px;background:#fff;border-color:#2a7ae2"><span><tt>0.00</tt></span></div>
<div class="t" style="left:921px;top:693px;">库存金额:</div>
<div class="in" style="left:979px;top:688px;width:99px;background:#fff;border-color:#2a7ae2"><span><tt>0.00</tt></span></div>
<div class="a" style="left:539px;top:730px;width:69px;height:25px;border:1px solid #c8ccd4;border-radius:2px;background:linear-gradient(#f8f8f8,#e8e8e8 50%,#dcdcdc)"></div>
<svg class="a" width="16" height="16" viewBox="0 0 16 16" style="left:546px;top:735px"><circle cx="7" cy="8" r="6" fill="#aaa"/><circle cx="7" cy="8" r="2.5" fill="#eee"/><path d="M6 14L15 4" stroke="#e8a030" stroke-width="2.2"/></svg>
<div class="t" style="left:571px;top:736px;">配置</div>
<div class="a" style="left:613px;top:730px;width:101px;height:25px;border:1px solid #c8ccd4;border-radius:2px;background:linear-gradient(#f8f8f8,#e8e8e8 50%,#dcdcdc)"></div>
<svg class="a" width="16" height="16" viewBox="0 0 16 16" style="left:620px;top:735px"><rect x="0.5" y="0.5" width="12" height="14" fill="#fff" stroke="#7a5ab0"/><rect x="2" y="3" width="2" height="9" fill="#9a5ad0"/><path d="M9 12H16M12.5 8.5V15.5" stroke="#3cb030" stroke-width="2.4"/></svg>
<div class="t" style="left:640px;top:736px;">保存新增(R)</div>
<div class="a" style="left:721px;top:730px;width:101px;height:25px;border:1px solid #c8ccd4;border-radius:2px;background:linear-gradient(#f8f8f8,#e8e8e8 50%,#dcdcdc)"></div>
<svg class="a" width="16" height="16" viewBox="0 0 16 16" style="left:728px;top:735px"><rect x="3.5" y="0.5" width="11" height="11" fill="#fff" stroke="#3a4ab0" stroke-width="1.4"/><rect x="0.5" y="4.5" width="10" height="11" fill="#fff" stroke="#3a4ab0" stroke-width="1.4"/><path d="M3 8H8M3 11H8" stroke="#3a4ab0"/></svg>
<div class="t" style="left:748px;top:736px;">保存复制(C)</div>
<div class="a" style="left:827px;top:730px;width:101px;height:25px;border:1px solid #c8ccd4;border-radius:2px;background:linear-gradient(#f8f8f8,#e8e8e8 50%,#dcdcdc)"></div>
<svg class="a" width="16" height="16" viewBox="0 0 16 16" style="left:834px;top:735px"><path d="M1 1H13L15 3V15H1Z" fill="#1a6ad8"/><rect x="4" y="1" width="7" height="5" fill="#fff"/><rect x="8" y="2" width="2" height="3" fill="#1a6ad8"/><rect x="3" y="9" width="10" height="6" fill="#1a6ad8" stroke="#fff" stroke-width="0"/></svg>
<div class="t" style="left:854px;top:736px;">保存关闭(Q)</div>
<div class="a" style="left:932px;top:730px;width:73px;height:25px;border:1px solid #c8ccd4;border-radius:2px;background:linear-gradient(#f8f8f8,#e8e8e8 50%,#dcdcdc)"></div>
<svg class="a" width="16" height="16" viewBox="0 0 16 16" style="left:939px;top:735px"><path d="M1 1L14 14M14 1L1 14" stroke="#111" stroke-width="2"/></svg>
<div class="t" style="left:956px;top:736px;">关闭(E)</div>
</body></html>
